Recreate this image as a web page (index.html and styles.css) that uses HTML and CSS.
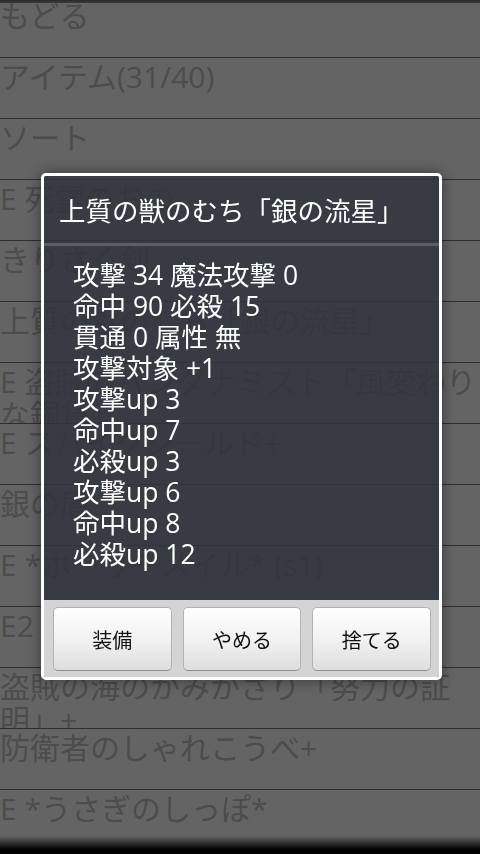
FILE: index.html
```html
<!DOCTYPE html>
<html lang="ja">
<head>
    <meta charset="UTF-8">
    <meta name="viewport" content="width=device-width, initial-scale=1.0">
    <title>アイテム</title>
    <link rel="stylesheet" href="styles.css">
</head>
<body>
    <div class="item-list">
        <div class="item-row">もどる</div>
        <div class="item-row">アイテム(31/40)</div>
        <div class="item-row">ソート</div>
        <div class="item-row">E 死霊のおの</div>
        <div class="item-row">きりさく剣</div>
        <div class="item-row">上質の獣のむち「銀の流星」</div>
        <div class="item-row">E 盗賊のバンダナミスト「風変わりな銅貨」</div>
        <div class="item-row">E スパイクシールド+</div>
        <div class="item-row">銀の盾</div>
        <div class="item-row">E *ホーリーメイル* (s1)</div>
        <div class="item-row">E2 くさりかたびら</div>
        <div class="item-row">盗賊の海のかみかざり「努力の証明」+</div>
        <div class="item-row">防衛者のしゃれこうべ+</div>
        <div class="item-row">E *うさぎのしっぽ*</div>
    </div>

    <div class="top-shade"></div>
    <div class="bottom-shade"></div>

    <div class="dialog">
        <div class="dialog-title">上質の獣のむち「銀の流星」</div>
        <div class="dialog-body">
            <p>攻撃 34 魔法攻撃 0</p>
            <p>命中 90 必殺 15</p>
            <p>貫通 0 属性 無</p>
            <p>攻撃対象 +1</p>
            <p>攻撃up 3</p>
            <p>命中up 7</p>
            <p>必殺up 3</p>
            <p>攻撃up 6</p>
            <p>命中up 8</p>
            <p>必殺up 12</p>
        </div>
        <div class="dialog-buttons">
            <button>装備</button>
            <button>やめる</button>
            <button>捨てる</button>
        </div>
    </div>
</body>
</html>
```

FILE: styles.css
```css
html, body {
    margin: 0;
    padding: 0;
    height: 854px;
    overflow: hidden;
    background-color: #646464;
    font-family: "Open Sans", "Noto Sans CJK JP", sans-serif;
}
.item-list {
    margin-top: -3px;
}
.item-row {
    height: 58px;
    overflow: hidden;
    border-bottom: 1px solid #2e2e2e;
    padding: 2px 0 0 0;
    font-size: 30px;
    line-height: 33px;
    color: #4c4c4c;
}
.top-shade {
    position: fixed;
    top: 0;
    left: 0;
    right: 0;
    height: 3px;
    background: linear-gradient(#2a2a2a, #3a3a3a);
}
.bottom-shade {
    position: fixed;
    bottom: 0;
    left: 0;
    right: 0;
    height: 18px;
    background: linear-gradient(rgba(0, 0, 0, 0), #000 75%);
}
.dialog {
    position: fixed;
    top: 173px;
    left: 41px;
    width: 401px;
    box-sizing: border-box;
    border: 3px solid #fff;
    border-radius: 5px;
    overflow: hidden;
    box-shadow: 0 0 14px rgba(0, 0, 0, 0.45);
}
.dialog-title {
    height: 67px;
    display: flex;
    align-items: center;
    padding-left: 15px;
    font-size: 26.5px;
    color: #fff;
    background-color: rgba(48, 52, 62, 0.86);
    border-bottom: 3px solid #5c5e63;
}
.dialog-body {
    padding: 14px 0 30px 29px;
    background-color: rgba(48, 52, 62, 0.86);
}
.dialog-body p {
    margin: 0;
    font-size: 26.5px;
    line-height: 31px;
    color: #fff;
}
.dialog-buttons {
    display: flex;
    gap: 11px;
    padding: 7px 8px 6px 9px;
    background-color: #d4d4d4;
}
.dialog-buttons button {
    flex: 1;
    height: 64px;
    border: 1px solid #b2b2b2;
    border-bottom-color: #8e8e8e;
    border-radius: 5px;
    background: linear-gradient(#ffffff, #f2f2f2 50%, #dedede);
    font-family: "Open Sans", "Noto Sans CJK JP", sans-serif;
    font-size: 20px;
    color: #111;
    padding: 0;
}
```
